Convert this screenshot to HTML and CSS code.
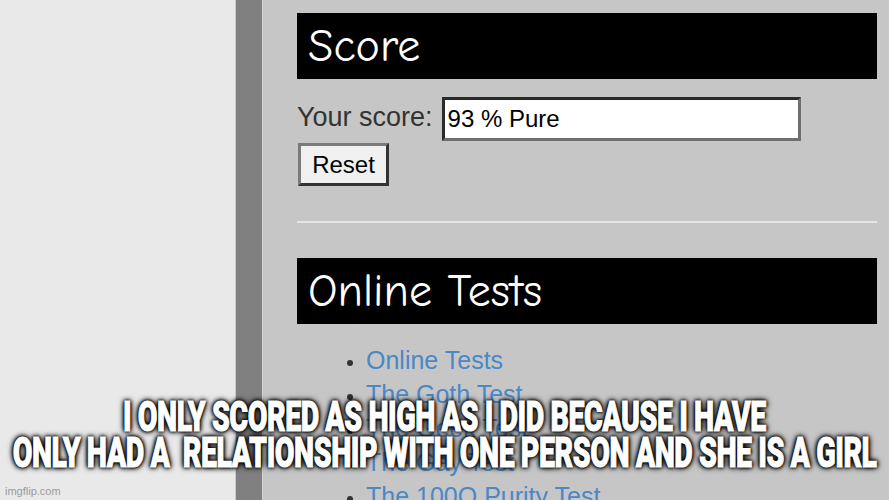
FILE: index.html
```html
<!DOCTYPE html>
<html>
<head>
<meta charset="utf-8">
<link rel="stylesheet" href="styles.css">
</head>
<body>
<div class="page">
  <div class="side"></div>
  <div class="rail"></div>
  <div class="main">
    <h2 class="bar">Score</h2>
    <div class="score-row">
      <span class="label">Your score:</span>
      <input class="field" type="text" value="93 % Pure">
    </div>
    <button class="reset">Reset</button>
    <hr class="rule">
    <h2 class="bar">Online Tests</h2>
    <ul class="links">
      <li><a href="#">Online Tests</a></li>
      <li><a href="#">The Goth Test</a></li>
      <li><a href="#">The Geek Test</a></li>
      <li><a href="#">The Gay Test</a></li>
      <li><a href="#">The 100Q Purity Test</a></li>
    </ul>
  </div>
</div>
<div class="caption">
  <div class="cap-line"><span class="cap-text">I ONLY SCORED AS HIGH AS I DID BECAUSE I HAVE</span></div>
  <div class="cap-line"><span class="cap-text">ONLY HAD A&nbsp; RELATIONSHIP WITH ONE PERSON AND SHE IS A GIRL</span></div>
</div>
<div class="watermark">imgflip.com</div>
</body>
</html>
```
FILE: styles.css
```css
html, body {
  margin: 0;
  padding: 0;
  width: 889px;
  height: 500px;
  overflow: hidden;
}
body {
  position: relative;
  font-family: "Liberation Sans", Arial, sans-serif;
  background: #c6c6c6;
}
.page {
  display: flex;
  height: 500px;
}
.side {
  width: 235px;
  background: #e9e9e9;
  border-right: 1px solid #c9c9c9;
}
.rail {
  width: 26px;
  background: #808080;
  border-right: 1px solid #d2d2d2;
}
.main {
  flex: 1;
  background: #c6c6c6;
  padding: 13px 12px 0 34px;
}
.bar {
  margin: 0;
  height: 66px;
  background: #000;
  color: #fff;
  font-family: "Comic Sans MS", "Comic Neue", cursive;
  font-weight: normal;
  font-size: 46px;
  line-height: 68px;
  padding-left: 11px;
  box-sizing: border-box;
  white-space: nowrap;
  overflow: hidden;
}
.score-row {
  display: flex;
  align-items: center;
  margin-top: 18px;
  height: 44px;
}
.label {
  font-size: 27px;
  color: #333;
  margin-right: 9px;
  position: relative;
  top: -2px;
}
.field {
  width: 359px;
  height: 44px;
  box-sizing: border-box;
  border: 3px solid;
  border-color: #2a2a2a #6f6f6f #6f6f6f #2a2a2a;
  background: #fff;
  font-family: "Liberation Sans", Arial, sans-serif;
  font-size: 24px;
  color: #000;
  padding: 0 3px;
  margin: 0;
}
.reset {
  display: block;
  margin: 2px 0 0 1px;
  width: 91px;
  height: 43px;
  box-sizing: border-box;
  background: #f0f0f0;
  border: 3px solid;
  border-color: #7a7a7a #333 #333 #7a7a7a;
  font-family: "Liberation Sans", Arial, sans-serif;
  font-size: 24px;
  color: #000;
  padding: 0;
}
.rule {
  margin: 35px 0 0 0;
  border: 0;
  height: 2px;
  background: #e6e6e6;
}
.rule + .bar {
  margin-top: 35px;
}
.links {
  margin: 19px 0 0 0;
  padding-left: 69px;
  font-size: 25px;
  line-height: 34px;
  color: #333;
}
.links li::marker {
  font-size: 20px;
}
.links a {
  color: #4a88c6;
  text-decoration: none;
}
.caption {
  position: absolute;
  left: 0;
  right: 0;
  top: 398px;
  color: #fff;
  font-family: Impact, Roboto, "Liberation Sans", sans-serif;
  font-weight: 900;
  font-size: 43px;
  line-height: 36px;
}
.cap-line {
  display: flex;
  justify-content: center;
  white-space: nowrap;
}
.cap-text {
  flex: none;
  transform: scaleX(0.665);
  transform-origin: center;
  letter-spacing: -0.7px;
  -webkit-text-stroke: 1px #fff;
  text-shadow: 0 0 2px #000, 0 0 3px #000, 0 0 5px #000, 0 0 7px #000, 0 0 9px #000;
}
.watermark {
  position: absolute;
  left: 5px;
  top: 485px;
  font-family: "Liberation Sans", Arial, sans-serif;
  font-size: 11px;
  color: #9a9a9a;
}
```
